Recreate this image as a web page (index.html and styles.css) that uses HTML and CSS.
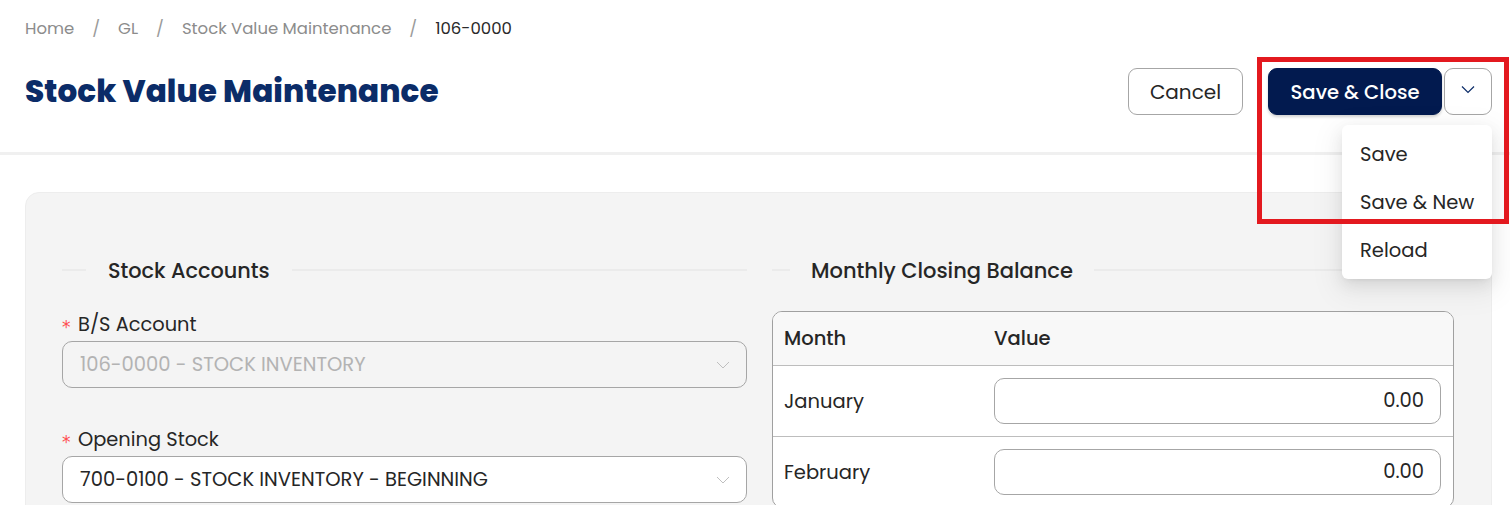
FILE: index.html
```html
<!DOCTYPE html>
<html lang="en">
<head>
<meta charset="utf-8">
<title>Stock Value Maintenance</title>
<link rel="stylesheet" href="styles.css">
</head>
<body>
<div class="page">
  <header class="page-header">
    <nav class="breadcrumb">
      <span class="crumb">Home</span><span class="sep">/</span>
      <span class="crumb">GL</span><span class="sep">/</span>
      <span class="crumb">Stock Value Maintenance</span><span class="sep">/</span>
      <span class="crumb current">106-0000</span>
    </nav>
    <div class="title-row">
      <h1 class="title">Stock Value Maintenance</h1>
      <div class="actions">
        <button class="btn btn-default">Cancel</button>
        <div class="split">
          <button class="btn btn-primary">Save &amp; Close</button>
          <button class="btn btn-toggle" aria-label="More">
            <svg class="chev" width="14" height="9" viewBox="0 0 14 9"><polyline points="1,1.5 7,7.5 13,1.5" fill="none" stroke="currentColor" stroke-width="1.2"/></svg>
          </button>
          <ul class="menu">
            <li class="menu-item">Save</li>
            <li class="menu-item">Save &amp; New</li>
            <li class="menu-item">Reload</li>
          </ul>
        </div>
      </div>
    </div>
  </header>

  <main class="content">
    <section class="card">
      <div class="col">
        <div class="divider"><span class="divider-text">Stock Accounts</span></div>
        <div class="form-item">
          <label class="label"><span class="req">*</span>B/S Account</label>
          <div class="select disabled">
            <span class="select-value">106-0000 - STOCK INVENTORY</span>
            <svg class="select-arrow" width="14" height="8" viewBox="0 0 14 8"><polyline points="1,1 7,7 13,1" fill="none" stroke="currentColor" stroke-width="1"/></svg>
          </div>
        </div>
        <div class="form-item">
          <label class="label"><span class="req">*</span>Opening Stock</label>
          <div class="select">
            <span class="select-value">700-0100 - STOCK INVENTORY - BEGINNING</span>
            <svg class="select-arrow" width="14" height="8" viewBox="0 0 14 8"><polyline points="1,1 7,7 13,1" fill="none" stroke="currentColor" stroke-width="1"/></svg>
          </div>
        </div>
      </div>

      <div class="col col-right">
        <div class="divider"><span class="divider-text">Monthly Closing Balance</span></div>
        <div class="table">
          <div class="tr thead">
            <div class="td c-month">Month</div>
            <div class="td c-value">Value</div>
          </div>
          <div class="tr">
            <div class="td c-month">January</div>
            <div class="td c-value"><div class="num-input">0.00</div></div>
          </div>
          <div class="tr">
            <div class="td c-month">February</div>
            <div class="td c-value"><div class="num-input">0.00</div></div>
          </div>
        </div>
      </div>
    </section>
  </main>
</div>
<div class="highlight"></div>
</body>
</html>
```

FILE: styles.css
```css
* { box-sizing: border-box; }

html, body {
  margin: 0;
  padding: 0;
  background: #ffffff;
  overflow: hidden;
}

body {
  font-family: "Poppins", "Inter", "Noto Sans", sans-serif;
  color: #262626;
  position: relative;
  height: 505px;
}

.page-header {
  padding: 17px 18px 37px 25px;
  border-bottom: 3px solid #f0f0f0;
}

.breadcrumb {
  display: flex;
  align-items: center;
  height: 24px;
  font-size: 16.5px;
  line-height: 24px;
  color: #8c8c8c;
}

.crumb.current { color: #2a2a2a; }

.sep {
  margin: 0 18px;
  color: #9a9a9a;
}

.title-row {
  display: flex;
  align-items: center;
  justify-content: space-between;
  margin-top: 27px;
  height: 47px;
}

.title {
  margin: 0;
  font-size: 31px;
  font-weight: 800;
  color: #0b2c68;
  letter-spacing: 0.1px;
}

.actions {
  display: flex;
  align-items: center;
  gap: 25px;
}

.btn {
  height: 47px;
  border-radius: 9px;
  font-family: inherit;
  font-size: 20px;
  cursor: pointer;
}

.btn-default {
  width: 115px;
  background: #fff;
  border: 1px solid #a6a6a6;
  color: #262626;
}

.split {
  position: relative;
  display: flex;
  gap: 2px;
}

.btn-primary {
  width: 174px;
  background: #021a4f;
  border: 1px solid #021a4f;
  color: #fff;
  font-weight: 500;
  font-size: 19.6px;
  box-shadow: 0 2px 3px rgba(0, 0, 0, 0.18);
}

.btn-toggle {
  width: 48px;
  background: #fff;
  border: 1px solid #a6a6a6;
  color: #0b2c68;
  display: flex;
  align-items: center;
  justify-content: center;
  padding: 0 0 4px 0;
}

.menu {
  position: absolute;
  top: 57px;
  right: 0;
  width: 150px;
  margin: 0;
  padding: 5px 0;
  list-style: none;
  background: #fff;
  border-radius: 6px;
  box-shadow: 0 6px 16px rgba(0, 0, 0, 0.08), 0 3px 6px -4px rgba(0, 0, 0, 0.12), 0 9px 28px 8px rgba(0, 0, 0, 0.05);
  z-index: 5;
}

.menu-item {
  height: 48px;
  line-height: 50px;
  padding-left: 18px;
  font-size: 19.5px;
  color: #262626;
}

.content {
  padding: 37px 18px 0 25px;
}

.card {
  display: grid;
  grid-template-columns: 685px 1fr;
  column-gap: 25px;
  padding: 62px 37px 40px 36px;
  background: #f4f4f4;
  border: 1px solid #ededed;
  border-radius: 14px;
}

.col { min-width: 0; }

.divider {
  display: flex;
  align-items: center;
  height: 30px;
  margin-bottom: 26px;
}

.divider::before,
.divider::after {
  content: "";
  height: 2px;
  background: #ebebeb;
}

.divider::before { width: 24px; }
.divider::after { flex: 1; }

.col-right .divider::before { width: 18px; }

.divider-text {
  padding: 0 22px;
  font-size: 20.8px;
  font-weight: 500;
  color: #262626;
  white-space: nowrap;
}

.col-right .divider-text { font-size: 21px; padding: 0 21px; }

.form-item { margin-bottom: 38px; }

.label {
  display: flex;
  align-items: center;
  height: 26px;
  font-size: 19.4px;
  color: #262626;
}

.req {
  color: #ff4d4f;
  font-family: "DejaVu Sans", sans-serif;
  font-size: 17px;
  width: 16px;
  padding-top: 6px;
}

.select {
  display: flex;
  align-items: center;
  justify-content: space-between;
  height: 47px;
  margin-top: 4px;
  padding: 0 16px 0 17px;
  background: #fff;
  border: 1px solid #a6a6a6;
  border-radius: 10px;
  font-size: 19.5px;
  color: #262626;
}

.select.disabled {
  background: #f4f4f4;
  color: #b3b3b3;
}

.select-arrow { color: #bfbfbf; }

.table {
  background: #fff;
  border: 1px solid #a0a0a0;
  border-radius: 10px;
  overflow: hidden;
}

.tr {
  display: flex;
  align-items: center;
  min-height: 71px;
  border-top: 1px solid #bdbdbd;
}

.tr.thead {
  min-height: 53px;
  border-top: 0;
  background: #f8f8f8;
  font-weight: 500;
}

.td {
  padding: 12px 12px 12px 11px;
  font-size: 19.5px;
  color: #262626;
}

.c-month { width: 210px; flex: none; }
.c-value { flex: 1; padding-right: 12px; }

.num-input {
  height: 46px;
  line-height: 44px;
  padding-right: 16px;
  text-align: right;
  background: #fff;
  border: 1px solid #a6a6a6;
  border-radius: 10px;
}

.highlight {
  position: absolute;
  left: 1257px;
  top: 57px;
  width: 252px;
  height: 167px;
  border: 5px solid #e3191f;
  z-index: 10;
  pointer-events: none;
}
```
